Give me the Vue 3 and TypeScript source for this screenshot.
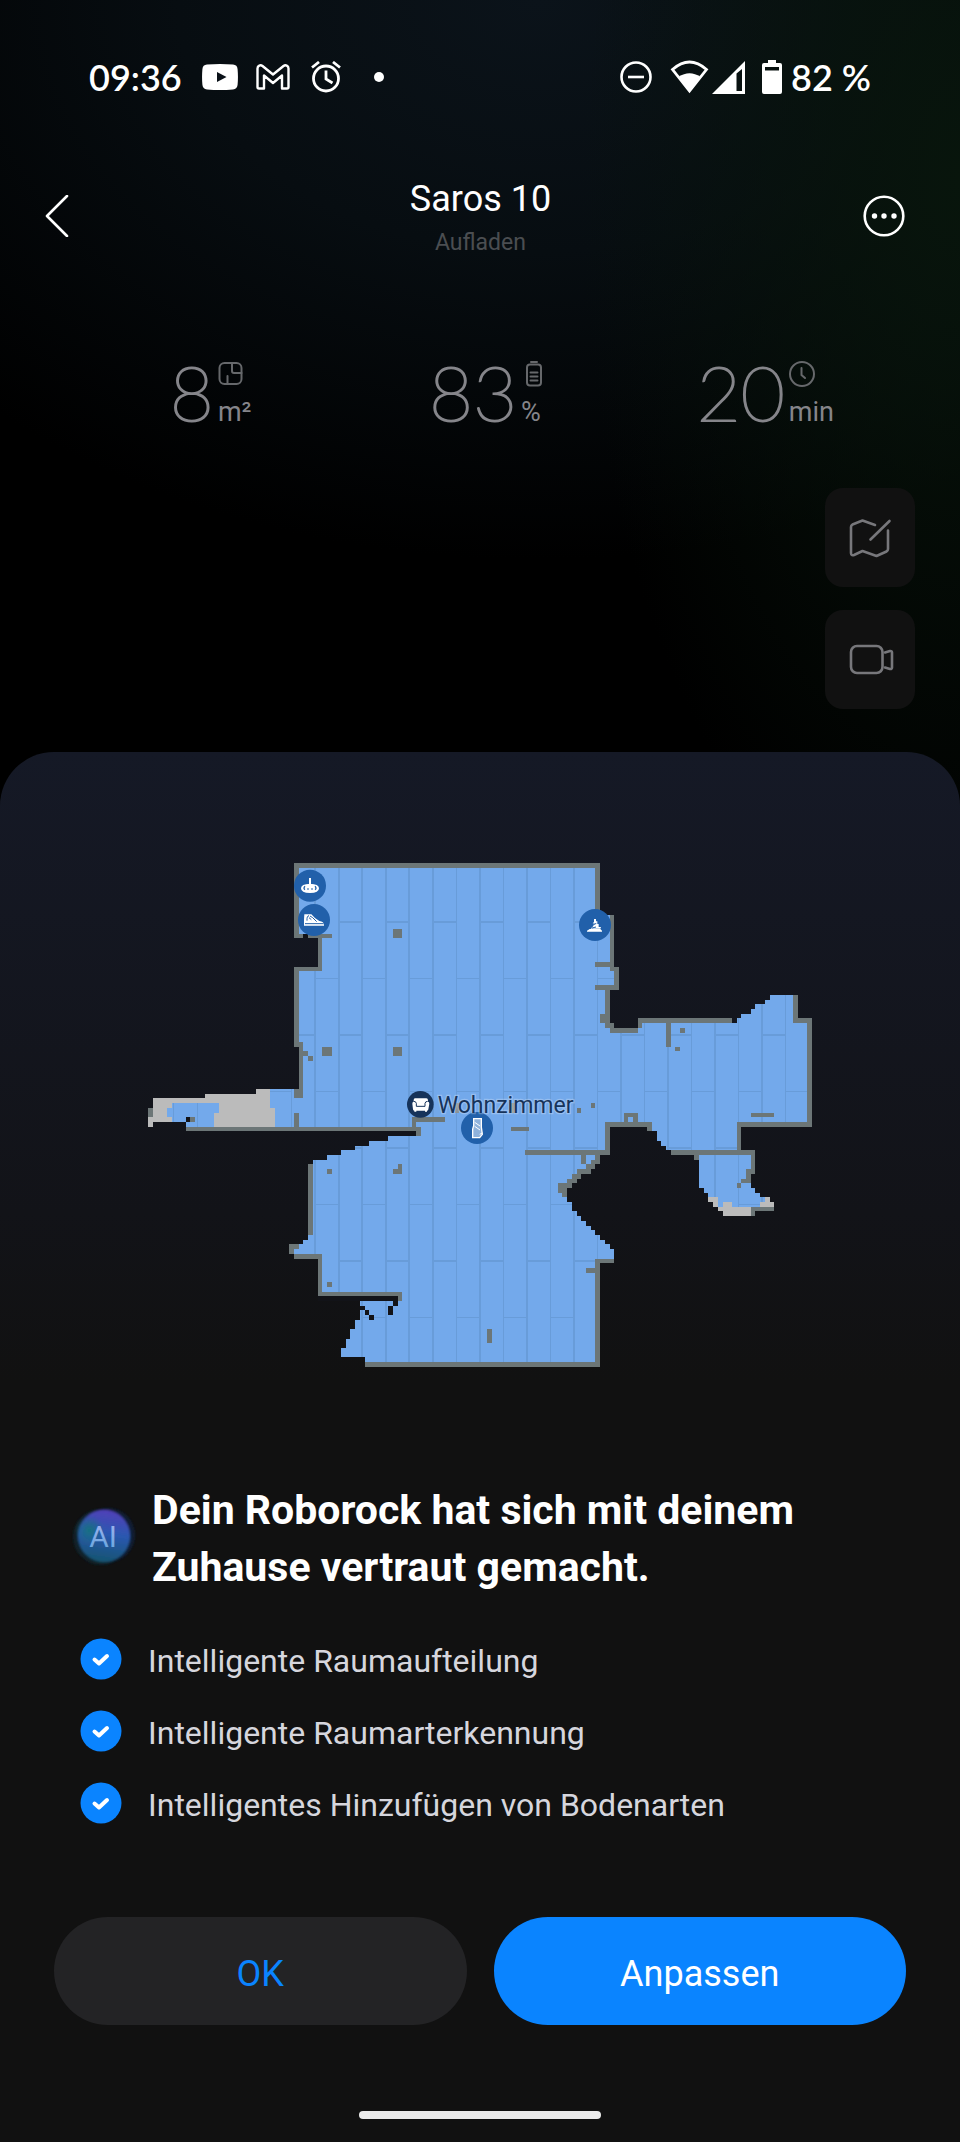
<script setup lang="ts">
interface Stat {
  value: string
  unit: string
  icon: 'area' | 'battery' | 'clock'
}

type Box = [x: number, y: number, width: number, height: number]

const stats: Stat[] = [
  { value: '8', unit: 'm²', icon: 'area' },
  { value: '83', unit: '%', icon: 'battery' },
  { value: '20', unit: 'min', icon: 'clock' },
]

const features: string[] = [
  'Intelligente Raumaufteilung',
  'Intelligente Raumarterkennung',
  'Intelligentes Hinzufügen von Bodenarten',
]

const floorPath = [
  // main room, clockwise from the top left corner
  'M492 39H1410V195H1452V351H1467V420H1440V534H1524V504H1806V519H1821V504H1833V492H1863V477H1875V462H1905V450H1920V435H2004V504H2046V831H1833V900H1875V972H1863V1014H1875V1029H1890V1041H1920V1056H1932V1083H1875V1098H1779V1083H1764V1071H1749V1056H1734V1029H1722V1014H1707V915H1623V900H1608V888H1593V873H1581V843H1551V831H1440V915H1410V942H1395V957H1383V972H1353V987H1341V999H1326V1014H1311V1056H1326V1083H1341V1098H1353V1113H1368V1128H1383V1140H1395V1155H1410V1170H1425V1182H1440V1197H1452V1239H1410V1551H705V1521H633V1494H648V1467H660V1437H675V1410H690V1353H789V1368H804V1353H816V1326H564V1227H492V1212H477V1182H507V1182H519V1170H534V930H549V930H591V915H633V900H675V888H717V873H774V858H858V843H873V831H168V816H69V831H54V774H69V744H225V732H378V717H507V591H492V351H564V264H492Z',
].join(' ')

const walls: Box[] = [
  [492, 39, 918, 15], [492, 39, 15, 225], [1395, 39, 15, 156], [492, 252, 27, 12], [534, 252, 72, 12],
  [564, 252, 12, 111], [492, 351, 84, 12], [492, 351, 15, 240], [492, 576, 27, 15], [507, 576, 12, 141],
  [492, 717, 27, 26], [519, 603, 15, 15], [534, 618, 15, 15], [789, 237, 27, 27], [789, 591, 27, 27],
  [576, 591, 30, 27], [492, 789, 15, 42], [168, 831, 705, 12], [858, 831, 15, 27], [846, 801, 12, 30],
  [846, 801, 99, 15], [54, 774, 15, 27], [180, 801, 15, 15],
  [1440, 195, 12, 168], [1395, 336, 57, 15], [1440, 351, 27, 12], [1452, 351, 15, 69], [1395, 405, 72, 15],
  [1425, 420, 15, 114], [1410, 492, 30, 27], [1425, 519, 27, 15], [1440, 534, 84, 15], [1524, 504, 12, 30],
  [1524, 504, 282, 15], [1608, 519, 15, 72], [1650, 534, 15, 15], [1635, 591, 15, 12],
  [1989, 435, 15, 84], [1989, 504, 57, 15], [2031, 504, 15, 327], [1821, 816, 225, 15], [1863, 789, 69, 12],
  [1821, 816, 12, 99], [1623, 900, 252, 15], [1692, 915, 15, 15], [1863, 900, 12, 72], [1848, 957, 15, 42],
  [1833, 987, 30, 12], [1821, 999, 12, 15], [1863, 1071, 69, 12], [1863, 1071, 12, 27],
  [1425, 816, 141, 15], [1551, 831, 15, 12], [1482, 789, 42, 12], [1482, 801, 12, 15], [1509, 801, 15, 15],
  [1425, 816, 15, 99], [1185, 900, 255, 15], [1353, 915, 15, 27], [1395, 915, 15, 15], [1383, 930, 27, 12],
  [1368, 942, 27, 15], [1341, 957, 42, 15], [1326, 972, 27, 15], [1311, 987, 30, 12], [1284, 999, 42, 15],
  [1284, 1014, 27, 15], [1296, 1029, 15, 12], [1395, 1227, 57, 12], [1395, 1227, 15, 324], [1368, 1254, 27, 15],
  [705, 1536, 705, 15], [1071, 1437, 15, 42], [1143, 831, 54, 12], [1341, 774, 12, 15], [1383, 759, 12, 15],
  [534, 942, 15, 213], [477, 1182, 30, 15], [477, 1182, 15, 30], [492, 1212, 84, 15], [564, 1212, 12, 126],
  [564, 1326, 252, 12], [804, 1338, 12, 15], [591, 957, 15, 15], [591, 1296, 15, 15], [789, 957, 27, 15],
  [804, 942, 12, 30],
]

const gaps: Box[] = [
  [519, 252, 15, 12], [168, 801, 12, 15], [564, 1338, 240, 15], [789, 1338, 15, 30], [774, 1368, 15, 27],
  [690, 1368, 15, 12], [705, 1380, 12, 15], [717, 1395, 15, 15], [534, 930, 15, 12],
]

const unexplored: Box[] = [
  [54, 801, 15, 30], [69, 744, 57, 30], [69, 774, 42, 27], [69, 801, 57, 15], [126, 744, 99, 15],
  [225, 732, 153, 27], [267, 759, 111, 30], [252, 789, 126, 42], [378, 717, 42, 57], [378, 774, 57, 57],
  [1734, 1041, 30, 15], [1749, 1056, 15, 15], [1779, 1056, 27, 15], [1764, 1071, 99, 12], [1779, 1083, 84, 15],
  [1905, 1041, 15, 15], [1890, 1056, 42, 15],
]

// Floor boards: staggered planks, each 70.6 wide and 339 long
const plank = 70.6
const boards: Box[] = []
for (let col = -6; col <= 21; col++) {
  const x = Math.round(555 + col * plank)
  boards.push([x - 2, 0, col % 2 ? 5 : 4, 1590])
  const odd = Math.abs(col) % 2 === 1
  for (let y = odd ? 214 : 384; y < 1590; y += 339) {
    boards.push([x, y, 70, odd ? 5 : 3])
  }
}
</script>

<template>
  <div class="screen">
    <header class="status">
      <div class="status-side">
        <span class="clock">09:36</span>
        <svg class="s-video" viewBox="0 0 36 26" aria-hidden="true">
          <path fill="#fff" d="M5 .6Q18-.6 31 .6q4.300.4 4.600 4.600.7 7.800 0 15.600-.3 4.200-4.600 4.600-13 1.200-26 0-4.300-.4-4.600-4.600-.7-7.800 0-15.600Q.7 1 5 .6Z" />
          <path fill="#0a1118" d="m15 8 9.500 5-9.500 5z" />
        </svg>
        <svg class="s-mail" viewBox="0 0 34 26" fill="none" stroke="#fff" stroke-width="2.400" stroke-linejoin="round" aria-hidden="true">
          <path d="M1.500 23V4.500C1.500 1.500 4.500.5 6.500 2L17 10.500 27.500 2c2-1.500 5-.5 5 2.500V23q0 1.500-1.500 1.500h-5V11.500L17 19 8 11.500v13H3q-1.500 0-1.500-1.500Z" />
        </svg>
        <svg class="s-alarm" viewBox="0 0 30 32" fill="none" stroke="#fff" stroke-width="2.800" aria-hidden="true">
          <circle cx="15" cy="17.500" r="12.500" />
          <path d="M15 9.500V18l6.500 4M1 6.500 8 1M29 6.500 22 1" />
        </svg>
        <span class="dot"></span>
      </div>
      <div class="status-side">
        <svg class="s-dnd" viewBox="0 0 32 32" fill="none" stroke="#fff" stroke-width="2.600" aria-hidden="true">
          <circle cx="16" cy="16" r="14.500" />
          <path d="M8 16h16" />
        </svg>
        <svg class="s-wifi" viewBox="0 0 40 34" aria-hidden="true">
          <path fill="none" stroke="#fff" stroke-width="2.800" d="M2.500 9.500Q19.500-5.500 36.500 9.500L19.500 31Z" />
          <path fill="#fff" d="M8.500 17q11-7.500 22 0l-11 15z" />
        </svg>
        <svg class="s-cell" viewBox="0 0 33 33" aria-hidden="true">
          <path fill="#fff" fill-rule="evenodd" d="M33 0v33H0ZM24.500 12.500V30H30V8Z" />
        </svg>
        <svg class="s-batt" viewBox="0 0 20 34" aria-hidden="true">
          <path fill="#fff" fill-rule="evenodd" d="M6 0h8v3h4q2 0 2 2v27q0 2-2 2H2q-2 0-2-2V5q0-2 2-2h4ZM3 7v3.500h14V7Z" />
        </svg>
        <span class="clock">82 %</span>
      </div>
    </header>

    <nav class="bar">
      <button class="icon-btn" type="button" aria-label="Zurück">
        <svg viewBox="0 0 42 42" fill="none" stroke="#fff" stroke-width="2.600" stroke-linecap="round" stroke-linejoin="round"><path d="M31 1 11 21l20 20" /></svg>
      </button>
      <div class="titles">
        <h1>Saros 10</h1>
        <p>Aufladen</p>
      </div>
      <button class="icon-btn" type="button" aria-label="Mehr">
        <svg viewBox="0 0 42 42" fill="#fff"><circle cx="21" cy="21" r="19.300" fill="none" stroke="#fff" stroke-width="2.600" /><circle cx="11.500" cy="21" r="2.700" /><circle cx="21" cy="21" r="2.700" /><circle cx="31" cy="21" r="2.700" /></svg>
      </button>
    </nav>

    <section class="stats">
      <div v-for="s in stats" :key="s.unit" class="stat">
        <span class="num">{{ s.value }}</span>
        <span class="meta">
          <svg v-if="s.icon === 'area'" viewBox="0 0 26 26"><rect x="1.500" y="2" width="22" height="21" rx="5" /><path d="M14 2v8q0 2 2 2h7.500M9.500 23v-8" /></svg>
          <svg v-else-if="s.icon === 'battery'" viewBox="0 0 26 26"><rect x="6" y="3.500" width="14" height="21" rx="3" /><path d="M10 1h6M9.500 11.500h7M9.500 15.500h7M9.500 19.500h7" /></svg>
          <svg v-else viewBox="0 0 26 26"><circle cx="13" cy="13" r="12" /><path d="M12.500 7v7l3.500 3" /></svg>
          <span class="unit">{{ s.unit }}</span>
        </span>
      </div>
    </section>

    <div class="tools">
      <button class="tool" type="button" aria-label="Karte bearbeiten">
        <svg viewBox="0 0 44 44"><path d="M27 9 14.500 4.500 4.500 8.500Q3 9.500 3 11v26q0 3 3 2l8.500-4 14 5 10-4.500q1.500-1 1.500-2.500V14.500M41.500 5 22.500 23.500" /></svg>
      </button>
      <button class="tool" type="button" aria-label="Kamera">
        <svg viewBox="0 0 44 44"><rect x="3" y="8" width="31.500" height="27" rx="6" /><path d="m37 14.500 5-1.500q2-.3 2 1.500v15q0 1.800-2 1.500l-5-1.500" /></svg>
      </button>
    </div>

    <main class="sheet">
      <svg class="map" viewBox="0 0 2100 1590" role="img" aria-label="Wohnzimmer">
        <defs>
          <clipPath id="floor"><path :d="floorPath" /></clipPath>
        </defs>
        <g shape-rendering="crispEdges">
          <path :d="floorPath" fill="#73a9eb" />
          <g clip-path="url(#floor)" fill="#689cd9">
            <rect v-for="(b, i) in boards" :key="i" :x="b[0]" :y="b[1]" :width="b[2]" :height="b[3]" />
          </g>
          <g fill="#bbb"><rect v-for="(b, i) in unexplored" :key="i" :x="b[0]" :y="b[1]" :width="b[2]" :height="b[3]" /></g>
          <g fill="#6c7677"><rect v-for="(b, i) in walls" :key="i" :x="b[0]" :y="b[1]" :width="b[2]" :height="b[3]" /></g>
          <g fill="#121318"><rect v-for="(b, i) in gaps" :key="i" :x="b[0]" :y="b[1]" :width="b[2]" :height="b[3]" /></g>
          <path fill="#8b9499" d="M975 759h12v30h-12zM1143 759h12v30h-12z" />
        </g>

        <g fill="#2160aa">
          <circle cx="540" cy="107" r="48" />
          <circle cx="552" cy="210" r="48" />
          <circle cx="1395" cy="225" r="48" />
          <circle cx="1041" cy="834" r="48" />
        </g>
        <!-- pedestal -->
        <path fill="#fff" d="M537 84h6v23h-6zM540 101q27 1 27 14 0 14-27 14t-27-14q0-13 27-14Z" />
        <path fill="none" stroke="#2160aa" stroke-width="4" d="M525 109q-6 6 0 10M555 109q6 6 0 10M532 117h4M544 117h4" />
        <!-- shoe -->
        <path fill="#fff" d="M523 193h21q12 15 24 20 14 2 14 12v2h-60v-18Z" />
        <path fill="none" stroke="#2160aa" stroke-width="3" d="M525 221h56M531 212q-1-14 6-15M540 198l8 5 12 12M537 203l7 6" />
        <!-- heap -->
        <path fill="#fff" d="M1392 207h6v7h4v8h4v9h7l-2 5h-29l8-8v-6h8l-10-2 4-4ZM1371 242l8-5h32l5 5v3h-45z" />
        <path fill="none" stroke="#2160aa" stroke-width="3" d="m1387 226 12-6M1386 234l12-3" />
        <!-- mat -->
        <path fill="#8fb2dc" stroke="#fff" stroke-width="4" d="M1031 806h23v25l3 22-8 10h-21v-26l3-10Z" />
        <path fill="none" stroke="#fff" stroke-width="3" d="m1034 817 16 11M1034 829l16 11M1049 853l8-4" />

        <circle cx="871" cy="763" r="40" fill="#16335a" />
        <path fill="#fff" d="M855 745h34q5 0 5 6v4q4 0 4 6l-3 17q0 4-4 4v3h-6v-3h-26v3h-6v-3q-4 0-4-4l-2-17q0-6 4-6v-4q0-6 4-6Z" />
        <path fill="none" stroke="#16335a" stroke-width="3" d="M851 754q7 0 8 6v9h26v-9q1-6 8-6" />
        <text class="room" x="923" y="789">Wohnzimmer</text>
      </svg>

      <div class="intro">
        <svg class="ai" viewBox="0 0 64 64" aria-hidden="true">
          <defs>
            <linearGradient id="orb" x1=".55" y1="0" x2=".4" y2="1"><stop offset="0" stop-color="#5140b8" /><stop offset=".45" stop-color="#2a58b0" /><stop offset="1" stop-color="#15546f" /></linearGradient>
            <radialGradient id="teal"><stop offset="0" stop-color="#17717f" /><stop offset="1" stop-color="#17717f" stop-opacity="0" /></radialGradient>
            <linearGradient id="ink" x1="0" y1="0" x2="0" y2="1"><stop offset="0" stop-color="#a9b4f0" /><stop offset="1" stop-color="#5fa5dc" /></linearGradient>
            <filter id="soft"><feGaussianBlur stdDeviation="1" /></filter>
          </defs>
          <g filter="url(#soft)">
            <circle cx="29" cy="33" r="29" fill="#0d2733" opacity=".7" />
            <circle cx="36" cy="31" r="28" fill="#10203c" opacity=".8" />
            <circle cx="32" cy="32" r="27" fill="url(#orb)" />
            <circle cx="17" cy="26" r="15" fill="url(#teal)" />
          </g>
          <text class="ai-text" x="31" y="43" text-anchor="middle" fill="url(#ink)">AI</text>
        </svg>
        <h2>Dein Roborock hat sich mit deinem Zuhause vertraut gemacht.</h2>
      </div>

      <ul class="features">
        <li v-for="f in features" :key="f">
          <svg viewBox="0 0 42 42" aria-hidden="true"><circle cx="21" cy="21" r="20.500" fill="#0a84ff" /><path d="m14.500 21.500 4.500 4 8-7.500" fill="none" stroke="#fff" stroke-width="4" stroke-linecap="round" stroke-linejoin="round" /></svg>
          <span>{{ f }}</span>
        </li>
      </ul>

      <div class="actions">
        <button class="action" type="button">OK</button>
        <button class="action primary" type="button">Anpassen</button>
      </div>
      <div class="home"></div>
    </main>
  </div>
</template>

<style>
body {
  margin: 0;
  background: #000;
}
</style>

<style scoped>
.screen {
  display: flex;
  flex-direction: column;
  min-height: 100vh;
  box-sizing: border-box;
  font-family: Roboto, "Liberation Sans", sans-serif;
  color: #fff;
  background:
    radial-gradient(ellipse 380px 760px at 100% 180px, #08150c 0%, rgba(8, 21, 12, 0) 100%),
    radial-gradient(ellipse 800px 560px at 56% 0, #0b131a 0%, #070d11 45%, rgba(0, 0, 0, 0) 100%),
    #000;
}
button {
  margin: 0;
  padding: 0;
  border: 0;
  background: none;
  font: inherit;
  color: inherit;
}
h1, h2, p, ul {
  margin: 0;
  padding: 0;
}
svg {
  display: block;
  flex: none;
}
.status {
  display: flex;
  justify-content: space-between;
  align-items: center;
  height: 40px;
  padding: 57px 89px 0 89px;
}
.status-side {
  display: flex;
  align-items: center;
}
.clock {
  font-family: Lato, Roboto, sans-serif;
  font-size: 36px;
  line-height: 40px;
  font-weight: 600;
}
.s-video { width: 36px; height: 26px; margin-left: 20px; }
.s-mail { width: 34px; height: 26px; margin-left: 18px; }
.s-alarm { width: 30px; height: 32px; margin-left: 21px; }
.dot { width: 10px; height: 10px; margin-left: 33px; border-radius: 50%; background: #fff; }
.s-dnd { width: 32px; height: 32px; }
.s-wifi { width: 40px; height: 34px; margin-left: 18px; }
.s-cell { width: 33px; height: 33px; margin-left: 2px; }
.s-batt { width: 20px; height: 34px; margin: 0 9px 0 17px; }
.bar {
  display: flex;
  justify-content: space-between;
  align-items: flex-start;
  margin-top: 78px;
  padding: 0 55px 0 36px;
}
.icon-btn {
  margin-top: 20px;
}
.icon-btn svg {
  width: 42px;
  height: 42px;
}
.titles {
  flex: 1;
  padding-left: 20px;
  text-align: center;
}
h1 {
  font-size: 36px;
  line-height: 48px;
  font-weight: 400;
}
.titles p {
  font-size: 23px;
  line-height: 40px;
  color: #4b4e51;
}
.stats {
  display: grid;
  grid-template-columns: repeat(3, 1fr);
  margin-top: 87px;
  padding: 0 56px 0 72px;
}
.stat {
  display: flex;
  justify-content: center;
  gap: 4px;
  color: #85858a;
}
.num {
  font-family: Lato, Roboto, sans-serif;
  font-size: 76px;
  line-height: 84px;
  font-weight: 200;
  -webkit-text-stroke: 2px #85858a;
}
.meta {
  display: flex;
  flex-direction: column;
  padding-top: 11px;
}
.meta svg {
  width: 26px;
  height: 26px;
  fill: none;
  stroke: #66686b;
  stroke-width: 2;
  stroke-linecap: round;
}
.unit {
  margin-top: 9px;
  font-size: 27px;
  line-height: 32px;
}
.tools {
  display: flex;
  flex-direction: column;
  align-items: flex-end;
  gap: 23px;
  margin-top: 54px;
  padding-right: 45px;
}
.tool {
  display: grid;
  place-items: center;
  width: 90px;
  height: 99px;
  border-radius: 18px;
  background: #111;
}
.tool svg {
  width: 44px;
  height: 44px;
  fill: none;
  stroke: #77777b;
  stroke-width: 2.6;
  stroke-linecap: round;
  stroke-linejoin: round;
  overflow: visible;
}
.sheet {
  flex: 1;
  display: flex;
  flex-direction: column;
  margin-top: 43px;
  padding: 98px 54px 23px;
  border-radius: 54px 54px 0 0;
  background: linear-gradient(#151926 0, #121318 460px, #111 630px);
}
.map {
  align-self: stretch;
  margin: 0 76px;
  overflow: visible;
}
.room {
  font-size: 69px;
  fill: #16335a;
  paint-order: stroke;
  stroke: rgba(255, 255, 255, 0.25);
  stroke-width: 8px;
}
.intro {
  display: flex;
  align-items: flex-start;
  gap: 17px;
  margin-top: 102px;
  padding-left: 19px;
}
.ai {
  width: 62px;
  height: 62px;
  margin-top: 23px;
  overflow: visible;
}
.ai-text {
  font-size: 31px;
}
h2 {
  font-size: 41px;
  line-height: 57px;
  font-weight: 700;
}
.features {
  list-style: none;
  margin-top: 27px;
  padding-left: 26px;
}
.features li {
  display: flex;
  align-items: center;
  gap: 26px;
  height: 72px;
  font-size: 32px;
  color: #d6d6dd;
}
.features svg {
  width: 42px;
  height: 42px;
}
.features span {
  padding-top: 4px;
}
.actions {
  display: grid;
  grid-template-columns: 1fr 1fr;
  gap: 27px;
  margin-top: 78px;
}
.action {
  height: 108px;
  border-radius: 54px;
  background: #232325;
  color: #0a84ff;
  font-size: 36px;
  padding-top: 6px;
}
.action.primary {
  background: #0a84ff;
  color: #fff;
}
.home {
  align-self: center;
  width: 242px;
  height: 8px;
  margin-top: auto;
  border-radius: 4px;
  background: #ebebeb;
}
</style>
